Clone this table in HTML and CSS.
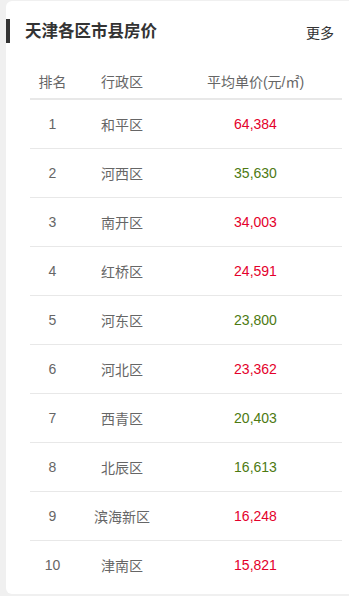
FILE: index.html
```html
<!DOCTYPE html>
<html lang="zh-CN">
<head>
<meta charset="utf-8">
<title>天津各区市县房价</title>
<link rel="stylesheet" href="styles.css">
</head>
<body>
<div class="card">
  <div class="title-row">
    <h2 class="title">天津各区市县房价</h2>
    <a class="more" href="#">更多</a>
  </div>
  <table class="price-table">
    <thead>
      <tr><th class="c-rank">排名</th><th class="c-name">行政区</th><th class="c-price">平均单价(元/㎡)</th></tr>
    </thead>
    <tbody>
      <tr><td>1</td><td>和平区</td><td class="red">64,384</td></tr>
      <tr><td>2</td><td>河西区</td><td class="green">35,630</td></tr>
      <tr><td>3</td><td>南开区</td><td class="red">34,003</td></tr>
      <tr><td>4</td><td>红桥区</td><td class="red">24,591</td></tr>
      <tr><td>5</td><td>河东区</td><td class="green">23,800</td></tr>
      <tr><td>6</td><td>河北区</td><td class="red">23,362</td></tr>
      <tr><td>7</td><td>西青区</td><td class="green">20,403</td></tr>
      <tr><td>8</td><td>北辰区</td><td class="green">16,613</td></tr>
      <tr><td>9</td><td>滨海新区</td><td class="red">16,248</td></tr>
      <tr><td>10</td><td>津南区</td><td class="red">15,821</td></tr>
    </tbody>
  </table>
</div>
</body>
</html>
```
FILE: styles.css
```css
html, body {
  margin: 0;
  padding: 0;
  background: #f0f0f0;
  overflow: hidden;
}
body {
  font-family: "Liberation Sans", "Noto Sans CJK SC", sans-serif;
  color: #666;
}
.card {
  background: #fff;
  margin: 1px -10px 0 6px;
  border-radius: 6px;
  padding: 18px 25px 5px 0;
  height: 570px;
}
.title-row {
  display: flex;
  align-items: center;
  justify-content: space-between;
  height: 24px;
  border-left: 4px solid #333;
}
.title {
  margin: 0 0 0 15px;
  font-size: 16.5px;
  font-weight: bold;
  color: #333;
  line-height: 24px;
}
.more {
  font-size: 14px;
  color: #333;
  text-decoration: none;
  line-height: 24px;
  margin-top: 3px;
}
.price-table {
  margin: 21px 0 0 24px;
  width: 312px;
  border-collapse: collapse;
  table-layout: fixed;
  font-size: 14px;
}
.price-table th {
  font-weight: normal;
  color: #666;
  height: 34px;
  padding: 0;
  border-bottom: 2px solid #e8e8e8;
  text-align: center;
  vertical-align: middle;
}
.c-rank { width: 45px; }
.c-name { width: 94px; }
.c-price { width: 173px; }
.price-table td {
  height: 48px;
  padding: 0;
  text-align: center;
  vertical-align: middle;
  border-bottom: 1px solid #e8e8e8;
  color: #666;
}
.price-table tbody tr:last-child td {
  border-bottom: none;
}
.price-table td.red { color: #e4002b; }
.price-table td.green { color: #4d7a12; }
```
